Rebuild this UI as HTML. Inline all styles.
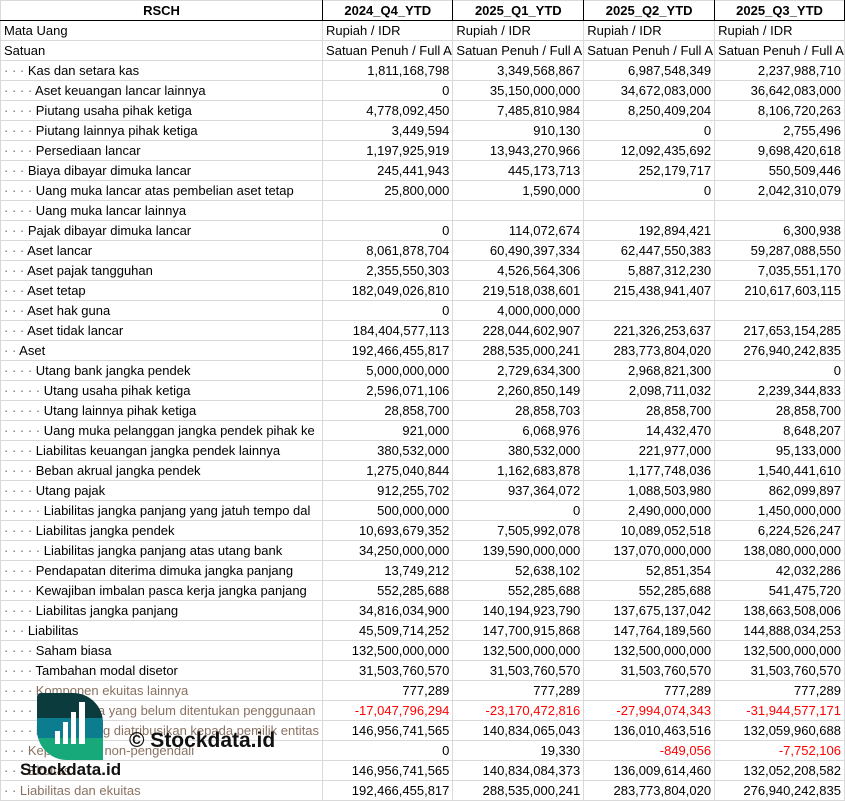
<!DOCTYPE html>
<html><head><meta charset="utf-8"><style>
body{margin:0;background:#fff;width:845px;height:801px;overflow:hidden;position:relative;font-family:"Liberation Sans",Arial,sans-serif;font-size:13px;color:#000}
table{border-collapse:collapse;table-layout:fixed;position:absolute;left:0;top:0}
td{height:19px;padding:0 3px;border:1px solid #d9d9d9;white-space:nowrap;overflow:hidden;line-height:19px}
td.n{text-align:right}
tr.h td{font-weight:bold;text-align:center;border-right:1px solid #000;border-bottom:1px solid #000}
.d{color:#666}
.r{color:#f00}
tr.f td:first-child{color:#8a7262}
</style></head><body>
<table>
<colgroup><col style="width:320px"><col style="width:131px"><col style="width:132px"><col style="width:132px"><col style="width:130px"></colgroup>
<tr class="h"><td>RSCH</td><td>2024_Q4_YTD</td><td>2025_Q1_YTD</td><td>2025_Q2_YTD</td><td>2025_Q3_YTD</td></tr>
<tr><td>Mata Uang</td><td>Rupiah / IDR</td><td>Rupiah / IDR</td><td>Rupiah / IDR</td><td>Rupiah / IDR</td></tr>
<tr><td>Satuan</td><td style="padding-right:0">Satuan Penuh / Full A</td><td style="padding-right:0">Satuan Penuh / Full A</td><td style="padding-right:0">Satuan Penuh / Full A</td><td style="padding-right:0">Satuan Penuh / Full A</td></tr>
<tr><td><span class="d">· · · </span>Kas dan setara kas</td><td class="n">1,811,168,798</td><td class="n">3,349,568,867</td><td class="n">6,987,548,349</td><td class="n">2,237,988,710</td></tr>
<tr><td><span class="d">· · · · </span>Aset keuangan lancar lainnya</td><td class="n">0</td><td class="n">35,150,000,000</td><td class="n">34,672,083,000</td><td class="n">36,642,083,000</td></tr>
<tr><td><span class="d">· · · · </span>Piutang usaha pihak ketiga</td><td class="n">4,778,092,450</td><td class="n">7,485,810,984</td><td class="n">8,250,409,204</td><td class="n">8,106,720,263</td></tr>
<tr><td><span class="d">· · · · </span>Piutang lainnya pihak ketiga</td><td class="n">3,449,594</td><td class="n">910,130</td><td class="n">0</td><td class="n">2,755,496</td></tr>
<tr><td><span class="d">· · · · </span>Persediaan lancar</td><td class="n">1,197,925,919</td><td class="n">13,943,270,966</td><td class="n">12,092,435,692</td><td class="n">9,698,420,618</td></tr>
<tr><td><span class="d">· · · </span>Biaya dibayar dimuka lancar</td><td class="n">245,441,943</td><td class="n">445,173,713</td><td class="n">252,179,717</td><td class="n">550,509,446</td></tr>
<tr><td><span class="d">· · · · </span>Uang muka lancar atas pembelian aset tetap</td><td class="n">25,800,000</td><td class="n">1,590,000</td><td class="n">0</td><td class="n">2,042,310,079</td></tr>
<tr><td><span class="d">· · · · </span>Uang muka lancar lainnya</td><td></td><td></td><td></td><td></td></tr>
<tr><td><span class="d">· · · </span>Pajak dibayar dimuka lancar</td><td class="n">0</td><td class="n">114,072,674</td><td class="n">192,894,421</td><td class="n">6,300,938</td></tr>
<tr><td><span class="d">· · · </span>Aset lancar</td><td class="n">8,061,878,704</td><td class="n">60,490,397,334</td><td class="n">62,447,550,383</td><td class="n">59,287,088,550</td></tr>
<tr><td><span class="d">· · · </span>Aset pajak tangguhan</td><td class="n">2,355,550,303</td><td class="n">4,526,564,306</td><td class="n">5,887,312,230</td><td class="n">7,035,551,170</td></tr>
<tr><td><span class="d">· · · </span>Aset tetap</td><td class="n">182,049,026,810</td><td class="n">219,518,038,601</td><td class="n">215,438,941,407</td><td class="n">210,617,603,115</td></tr>
<tr><td><span class="d">· · · </span>Aset hak guna</td><td class="n">0</td><td class="n">4,000,000,000</td><td></td><td></td></tr>
<tr><td><span class="d">· · · </span>Aset tidak lancar</td><td class="n">184,404,577,113</td><td class="n">228,044,602,907</td><td class="n">221,326,253,637</td><td class="n">217,653,154,285</td></tr>
<tr><td><span class="d">· · </span>Aset</td><td class="n">192,466,455,817</td><td class="n">288,535,000,241</td><td class="n">283,773,804,020</td><td class="n">276,940,242,835</td></tr>
<tr><td><span class="d">· · · · </span>Utang bank jangka pendek</td><td class="n">5,000,000,000</td><td class="n">2,729,634,300</td><td class="n">2,968,821,300</td><td class="n">0</td></tr>
<tr><td><span class="d">· · · · · </span>Utang usaha pihak ketiga</td><td class="n">2,596,071,106</td><td class="n">2,260,850,149</td><td class="n">2,098,711,032</td><td class="n">2,239,344,833</td></tr>
<tr><td><span class="d">· · · · · </span>Utang lainnya pihak ketiga</td><td class="n">28,858,700</td><td class="n">28,858,703</td><td class="n">28,858,700</td><td class="n">28,858,700</td></tr>
<tr><td><span class="d">· · · · · </span>Uang muka pelanggan jangka pendek pihak ke</td><td class="n">921,000</td><td class="n">6,068,976</td><td class="n">14,432,470</td><td class="n">8,648,207</td></tr>
<tr><td><span class="d">· · · · </span>Liabilitas keuangan jangka pendek lainnya</td><td class="n">380,532,000</td><td class="n">380,532,000</td><td class="n">221,977,000</td><td class="n">95,133,000</td></tr>
<tr><td><span class="d">· · · · </span>Beban akrual jangka pendek</td><td class="n">1,275,040,844</td><td class="n">1,162,683,878</td><td class="n">1,177,748,036</td><td class="n">1,540,441,610</td></tr>
<tr><td><span class="d">· · · · </span>Utang pajak</td><td class="n">912,255,702</td><td class="n">937,364,072</td><td class="n">1,088,503,980</td><td class="n">862,099,897</td></tr>
<tr><td><span class="d">· · · · · </span>Liabilitas jangka panjang yang jatuh tempo dal</td><td class="n">500,000,000</td><td class="n">0</td><td class="n">2,490,000,000</td><td class="n">1,450,000,000</td></tr>
<tr><td><span class="d">· · · · </span>Liabilitas jangka pendek</td><td class="n">10,693,679,352</td><td class="n">7,505,992,078</td><td class="n">10,089,052,518</td><td class="n">6,224,526,247</td></tr>
<tr><td><span class="d">· · · · · </span>Liabilitas jangka panjang atas utang bank</td><td class="n">34,250,000,000</td><td class="n">139,590,000,000</td><td class="n">137,070,000,000</td><td class="n">138,080,000,000</td></tr>
<tr><td><span class="d">· · · · </span>Pendapatan diterima dimuka jangka panjang</td><td class="n">13,749,212</td><td class="n">52,638,102</td><td class="n">52,851,354</td><td class="n">42,032,286</td></tr>
<tr><td><span class="d">· · · · </span>Kewajiban imbalan pasca kerja jangka panjang</td><td class="n">552,285,688</td><td class="n">552,285,688</td><td class="n">552,285,688</td><td class="n">541,475,720</td></tr>
<tr><td><span class="d">· · · · </span>Liabilitas jangka panjang</td><td class="n">34,816,034,900</td><td class="n">140,194,923,790</td><td class="n">137,675,137,042</td><td class="n">138,663,508,006</td></tr>
<tr><td><span class="d">· · · </span>Liabilitas</td><td class="n">45,509,714,252</td><td class="n">147,700,915,868</td><td class="n">147,764,189,560</td><td class="n">144,888,034,253</td></tr>
<tr><td><span class="d">· · · · </span>Saham biasa</td><td class="n">132,500,000,000</td><td class="n">132,500,000,000</td><td class="n">132,500,000,000</td><td class="n">132,500,000,000</td></tr>
<tr><td><span class="d">· · · · </span>Tambahan modal disetor</td><td class="n">31,503,760,570</td><td class="n">31,503,760,570</td><td class="n">31,503,760,570</td><td class="n">31,503,760,570</td></tr>
<tr class="f"><td><span class="d">· · · · </span>Komponen ekuitas lainnya</td><td class="n">777,289</td><td class="n">777,289</td><td class="n">777,289</td><td class="n">777,289</td></tr>
<tr class="f"><td><span class="d">· · · · · </span>Saldo laba yang belum ditentukan penggunaan</td><td class="n r">-17,047,796,294</td><td class="n r">-23,170,472,816</td><td class="n r">-27,994,074,343</td><td class="n r">-31,944,577,171</td></tr>
<tr class="f"><td><span class="d">· · · · </span>Ekuitas yang diatribusikan kepada pemilik entitas</td><td class="n">146,956,741,565</td><td class="n">140,834,065,043</td><td class="n">136,010,463,516</td><td class="n">132,059,960,688</td></tr>
<tr class="f"><td><span class="d">· · · </span>Kepentingan non-pengendali</td><td class="n">0</td><td class="n">19,330</td><td class="n r">-849,056</td><td class="n r">-7,752,106</td></tr>
<tr class="f"><td><span class="d">· · · </span>Ekuitas</td><td class="n">146,956,741,565</td><td class="n">140,834,084,373</td><td class="n">136,009,614,460</td><td class="n">132,052,208,582</td></tr>
<tr class="f"><td><span class="d">· · </span>Liabilitas dan ekuitas</td><td class="n">192,466,455,817</td><td class="n">288,535,000,241</td><td class="n">283,773,804,020</td><td class="n">276,940,242,835</td></tr>
</table>
<svg style="position:absolute;left:37px;top:693px" width="66" height="67" viewBox="0 0 66 67">
<defs><clipPath id="c"><path d="M4 0H36A30 30 0 0 1 66 30V67H30A30 30 0 0 1 0 37V4A4 4 0 0 1 4 0Z"/></clipPath></defs>
<g clip-path="url(#c)">
<rect x="0" y="0" width="66" height="25" fill="#0b3b3c"/>
<rect x="0" y="25" width="66" height="20" fill="#0b7d8e"/>
<rect x="0" y="45" width="66" height="22" fill="#17a97a"/>
<rect x="18" y="38" width="5" height="13" fill="#fff"/>
<rect x="26" y="29" width="5" height="22" fill="#fff"/>
<rect x="34" y="19" width="5" height="32" fill="#fff"/>
<rect x="42" y="9" width="6" height="42" fill="#fff"/>
</g></svg>
<div style="position:absolute;left:129px;top:728px;font-size:21px;font-weight:bold;line-height:26px;color:#111">© Stockdata.id</div>
<div style="position:absolute;left:20px;top:760px;font-size:17px;font-weight:bold;line-height:20px;color:#111">Stockdata.id</div>
</body></html>
